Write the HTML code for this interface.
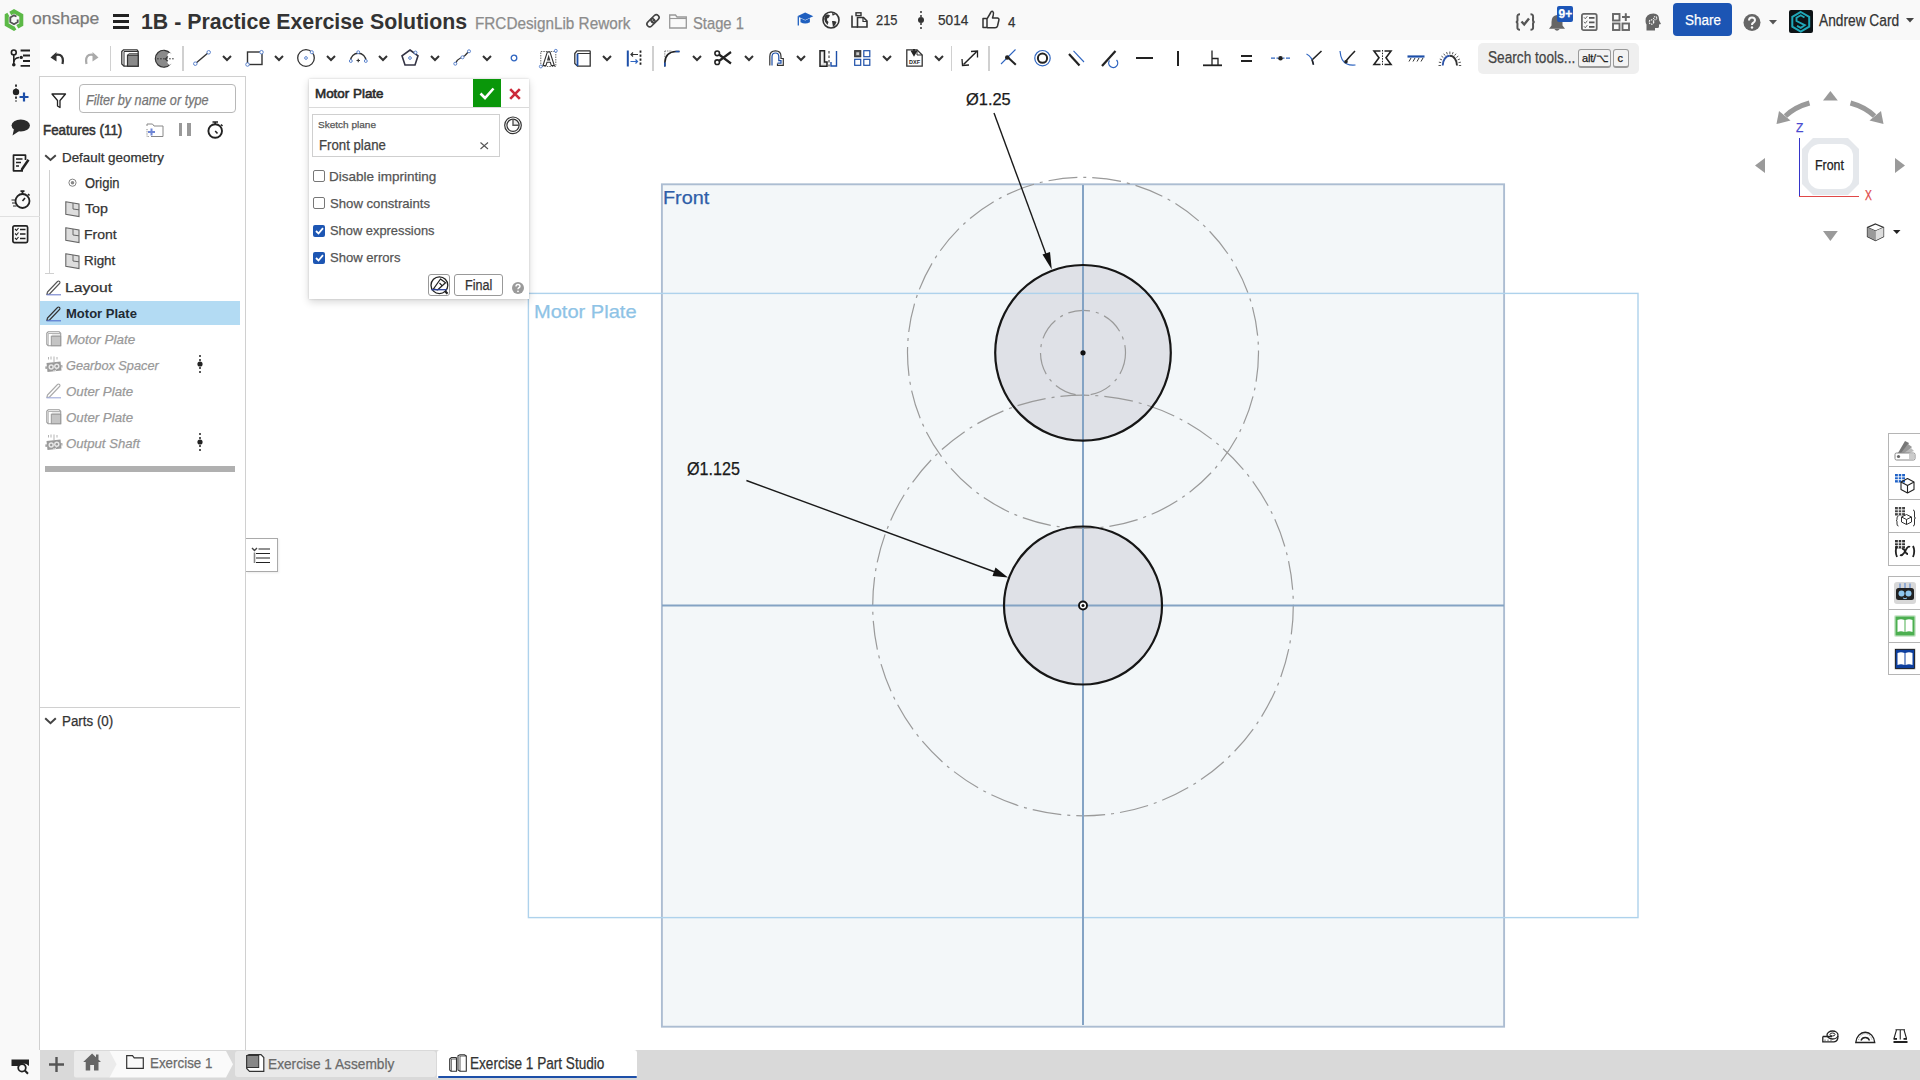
<!DOCTYPE html>
<html><head><meta charset="utf-8">
<style>
*{margin:0;padding:0;box-sizing:border-box}
html,body{width:1920px;height:1080px;overflow:hidden;background:#fff;font-family:"Liberation Sans",sans-serif;color:#333}
.a{position:absolute}
.t{position:absolute;white-space:nowrap;transform-origin:0 0;-webkit-text-stroke:0.25px currentColor}
.b{-webkit-text-stroke:0 !important}
svg{position:absolute;overflow:visible}
</style></head><body>

<div class="a" style="left:0px;top:0px;width:1920px;height:40px;background:#f9f9f9"></div>
<div class="a" style="left:0px;top:40px;width:40px;height:1040px;background:#f9f9f9"></div>
<div class="a" style="left:40px;top:40px;width:1880px;height:1010px;background:#fff"></div>
<svg style="left:0;top:0" width="1920" height="1080" viewBox="0 0 1920 1080"><rect x="661.9" y="184.3" width="842.2" height="842.4" fill="#f3f7f9" stroke="#acbdd2" stroke-width="1.9"/><circle cx="1083" cy="352.8" r="87.8" fill="#dfe1e7"/><circle cx="1083" cy="605.5" r="79" fill="#dfe1e7"/><circle cx="1083" cy="352.8" r="175.5" fill="none" stroke="#9a9a9a" stroke-width="1.2" stroke-dasharray="29 6 3 6"/><circle cx="1083" cy="352.8" r="42.5" fill="none" stroke="#9a9a9a" stroke-width="1.2" stroke-dasharray="22 6 3 6"/><circle cx="1083" cy="605.5" r="210.3" fill="none" stroke="#9a9a9a" stroke-width="1.2" stroke-dasharray="29 6 3 6"/><rect x="528.4" y="293.4" width="1109.6" height="624.2" fill="none" stroke="#aed2ec" stroke-width="1.4"/><line x1="1083" y1="185" x2="1083" y2="1025" stroke="#84a3c4" stroke-width="2"/><line x1="662" y1="605.5" x2="1504" y2="605.5" stroke="#84a3c4" stroke-width="2"/><circle cx="1083" cy="352.8" r="87.8" fill="none" stroke="#161616" stroke-width="2.2"/><circle cx="1083" cy="605.5" r="79" fill="none" stroke="#161616" stroke-width="2.2"/><circle cx="1083" cy="352.8" r="2.6" fill="#111"/><circle cx="1083" cy="605.5" r="4" fill="#fff" stroke="#111" stroke-width="1.9"/><circle cx="1083" cy="605.5" r="1.5" fill="#111"/><line x1="994" y1="113" x2="1047" y2="257" stroke="#1a1a1a" stroke-width="1.4"/><path d="M1051.8 269.4 L1042.5 254.5 L1050 252 Z" fill="#111"/><line x1="746.4" y1="480.5" x2="995" y2="572" stroke="#1a1a1a" stroke-width="1.4"/><path d="M1008 577.4 L992.5 576 L995.5 567.5 Z" fill="#111"/></svg>
<svg style="left:4px;top:9px" width="20" height="22" viewBox="0 0 20 22" ><path d="M10 2.3 L17.3 6.5 L17.3 15.5 L10 19.7 L2.7 15.5 L2.7 6.5 Z" fill="none" stroke="#5cb947" stroke-width="4" stroke-linejoin="miter" stroke-dasharray="22 2.2 21 2.2"/><path d="M12.5 7.5 L10 6.3 L6.3 8.5 L6.3 13 L10 15.2 L13.7 13 L13.7 10.5" fill="none" stroke="#555" stroke-width="1.9"/></svg>
<div class="a" style="left:113px;top:14.2px;width:16px;height:2.6px;background:#222"></div>
<div class="a" style="left:113px;top:20.4px;width:16px;height:2.6px;background:#222"></div>
<div class="a" style="left:113px;top:26.3px;width:16px;height:2.6px;background:#222"></div>
<svg style="left:645px;top:13px" width="16" height="16" viewBox="0 0 16 16" ><path d="M6.5 9.5 L9.5 6.5" stroke="#444" stroke-width="1.6"/><rect x="7.3" y="1.2" width="5.5" height="9" rx="2.7" transform="rotate(45 10 5.7)" fill="none" stroke="#444" stroke-width="1.6"/><rect x="3.2" y="5.3" width="5.5" height="9" rx="2.7" transform="rotate(45 6 9.8)" fill="none" stroke="#444" stroke-width="1.6"/></svg>
<svg style="left:669px;top:14px" width="18" height="15" viewBox="0 0 18 15" ><path d="M0.7 1 L6.5 1 L8 3 L17.3 3 L17.3 14 L0.7 14 Z" fill="none" stroke="#999" stroke-width="1.3"/><path d="M0.7 4.5 L17.3 4.5" stroke="#999" stroke-width="1.1"/></svg>
<svg style="left:797px;top:12.4px" width="16.5" height="14.6" viewBox="0 0 16.5 14.6" ><path d="M8.2 0.5 L16.3 4.3 L8.2 8 L0.2 4.3 Z" fill="#1f5fbf"/><path d="M3.5 6.3 L3.5 10.2 Q8.2 12.8 12.9 10.2 L12.9 6.3 L8.2 8.6 Z" fill="#1f5fbf"/><path d="M1.3 5 L1.3 13.5" stroke="#1f5fbf" stroke-width="1.3"/></svg>
<svg style="left:822px;top:11px" width="18" height="18" viewBox="0 0 18 18" ><circle cx="9" cy="9" r="8" fill="none" stroke="#333" stroke-width="1.6"/><path d="M3.5 4 Q6 3 8 4.5 Q7 7 5 7.5 Q4.5 9.5 6.5 11 L5.5 14 Q2.5 11 2.2 8 Z" fill="#333"/><path d="M10 10 Q13 9.5 14.5 11 Q13.5 14.5 11 16 Q10.5 13 10 10 Z" fill="#333"/><path d="M10 2 Q12 3 13.5 2.8 Q12 5 10.5 4.5 Z" fill="#333"/></svg>
<svg style="left:851px;top:12.4px" width="17" height="15.6" viewBox="0 0 17 15.6" ><path d="M1 3.5 L1 15 L7 15" fill="none" stroke="#333" stroke-width="1.6"/><rect x="5" y="0.8" width="5" height="2.8" fill="none" stroke="#333" stroke-width="1.4"/><path d="M6.5 5.5 L12.5 5.5 L16 9 L16 15 L6.5 15 Z" fill="none" stroke="#333" stroke-width="1.6"/><path d="M12 5.5 L12 9.5 L16 9.5" fill="none" stroke="#333" stroke-width="1.2"/></svg>
<svg style="left:917px;top:11px" width="8" height="18" viewBox="0 0 8 18" ><path d="M4 0 L4 18" stroke="#333" stroke-width="1.5" stroke-dasharray="2 2"/><circle cx="4" cy="9" r="3" fill="#333"/></svg>
<svg style="left:982px;top:10.4px" width="18" height="18.6" viewBox="0 0 18 18.6" ><path d="M1 8.5 L5 8.5 L5 17.5 L1 17.5 Z M5 9 L8.5 3 Q9 0.8 10.8 1.5 Q12 2.5 11.2 5.5 L10.5 8 L15.5 8 Q17.5 8.5 16.8 10.5 L15.5 16 Q15 17.8 13 17.8 L5 17.8" fill="none" stroke="#333" stroke-width="1.5" stroke-linejoin="round"/></svg>
<svg style="left:1515px;top:13px" width="20.5" height="18" viewBox="0 0 20.5 18" ><path d="M5 1.2 Q2.2 1.2 2.4 4 L2.5 7.2 Q2.5 9 0.8 9 Q2.5 9 2.5 10.8 L2.4 14 Q2.2 16.8 5 16.8" fill="none" stroke="#555" stroke-width="2"/><path d="M15.5 1.2 Q18.3 1.2 18.1 4 L18 7.2 Q18 9 19.7 9 Q18 9 18 10.8 L18.1 14 Q18.3 16.8 15.5 16.8" fill="none" stroke="#555" stroke-width="2"/><path d="M6.5 8.5 L9.2 11.5 L14 5.5" fill="none" stroke="#555" stroke-width="2.4"/></svg>
<svg style="left:1548px;top:14px" width="18" height="17" viewBox="0 0 18 17" ><path d="M9 1 Q14.5 1.5 14.5 8 L14.5 11.5 L17 14.8 L1 14.8 L3.5 11.5 L3.5 8 Q3.5 1.5 9 1 Z" fill="#666"/><path d="M6.3 15 Q9 18.5 11.7 15 Z" fill="#666"/></svg>
<div class="a" style="left:1557px;top:6px;width:16px;height:15.5px;background:#1d56b8;border-radius:2px"></div>
<div class="t" style="left:1558.5px;top:5.5px;font-size:12px;line-height:16px;font-weight:700;color:#fff">9+</div>
<svg style="left:1581px;top:13px" width="16.5" height="18" viewBox="0 0 16.5 18" ><rect x="0.9" y="0.9" width="14.8" height="16.3" rx="1.8" fill="none" stroke="#666" stroke-width="1.8"/><path d="M3 4.3 L4.3 5.8 L6.3 3.2 M3 8.8 L4.3 10.3 L6.3 7.7 M3 13.3 L4.3 14.8 L6.3 12.2" fill="none" stroke="#666" stroke-width="1"/><path d="M8 4.8 L13.5 4.8 M8 9.3 L13.5 9.3 M8 13.8 L13.5 13.8" stroke="#555" stroke-width="1.8"/></svg>
<svg style="left:1612px;top:12.5px" width="18.5" height="18.0" viewBox="0 0 18.5 18.0" ><rect x="1" y="1" width="6.5" height="6.5" fill="none" stroke="#666" stroke-width="1.9"/><rect x="1" y="10.5" width="6.5" height="6.5" fill="none" stroke="#666" stroke-width="1.9"/><rect x="10.5" y="10.5" width="6.5" height="6.5" fill="none" stroke="#666" stroke-width="1.9"/><path d="M13.8 0.3 L13.8 8 M10 4.1 L17.8 4.1" stroke="#666" stroke-width="2"/></svg>
<svg style="left:1645px;top:13px" width="17" height="18" viewBox="0 0 17 18" ><g transform="translate(17 0) scale(-1 1)"><path d="M8.5 0.5 Q16.5 0.5 16.5 8 Q16.5 10 15.5 11.5 L15.5 17.5 L7 17.5 L7 15 L4.5 15 Q3 15 3 13.5 L3 11.5 L1 11 L2.8 7.5 Q2.5 0.5 8.5 0.5 Z" fill="#666"/></g><circle cx="6.5" cy="9" r="2.2" fill="none" stroke="#f9f9f9" stroke-width="1.3" stroke-dasharray="1.3 0.9"/><circle cx="10.2" cy="5.2" r="1.6" fill="none" stroke="#f9f9f9" stroke-width="1.1" stroke-dasharray="1.1 0.8"/></svg>
<div class="a" style="left:1673px;top:3.3px;width:58.7px;height:32.5px;background:#1c55b4;border-radius:4px"></div>
<svg style="left:1743px;top:14px" width="18" height="17" viewBox="0 0 18 17" ><circle cx="9" cy="8.5" r="8.5" fill="#666"/><path d="M6 6.5 Q6 3.5 9 3.5 Q12 3.5 12 6.3 Q12 8 10 9 Q9 9.5 9 11" fill="none" stroke="#f9f9f9" stroke-width="2"/><circle cx="9" cy="13.5" r="1.2" fill="#f9f9f9"/></svg>
<svg style="left:1769px;top:19.5px" width="8" height="4.5" viewBox="0 0 8 4.5" ><path d="M0 0 L8 0 L4 4.5 Z" fill="#555"/></svg>
<div class="a" style="left:1789px;top:10px;width:23.5px;height:23px;background:#0d1316;border-radius:2px"></div>
<svg style="left:1789px;top:10px" width="23.5" height="23.5" viewBox="0 0 23.5 23.5" ><path d="M11.75 2 L20.2 6.9 L20.2 16.6 L11.75 21.5 L3.3 16.6 L3.3 6.9 Z" fill="none" stroke="#20a9ba" stroke-width="2"/><path d="M15.5 7.5 L11.75 5.3 L7.5 7.8 L7.5 11 L15.8 15.2 L11.75 17.8 L8 15.8" fill="none" stroke="#20a9ba" stroke-width="1.9"/></svg>
<svg style="left:1906px;top:17.5px" width="8" height="5.0" viewBox="0 0 8 5.0" ><path d="M0 0 L8 0 L4 4.5 Z" fill="#444"/></svg>
<svg style="left:10px;top:49px" width="20" height="18.5" viewBox="0 0 20 18.5" ><circle cx="3.8" cy="3.4" r="2.4" fill="none" stroke="#222" stroke-width="1.6"/><path d="M3.8 5.8 L3.8 16" stroke="#222" stroke-width="1.6"/><circle cx="3.8" cy="15.8" r="1.8" fill="#222"/><path d="M3.8 13 Q4 9 9 8.4" fill="none" stroke="#222" stroke-width="1.5"/><circle cx="11.2" cy="8.4" r="1.7" fill="#222"/><path d="M10.6 1.5 L20 1.5 M13 6.5 L20 6.5 M13 12 L20 12 M10.6 16.8 L20 16.8" stroke="#222" stroke-width="1.8"/></svg>
<svg style="left:50px;top:50px" width="14" height="15" viewBox="0 0 14 15" ><path d="M3 7 Q6 3.5 10 5 Q14 7 12.5 14" fill="none" stroke="#333" stroke-width="2.2"/><path d="M0.5 7.5 L6.5 2 L6.5 11.5 Z" fill="#333"/></svg>
<svg style="left:85px;top:50px" width="14" height="15" viewBox="0 0 14 15" ><path d="M11 7 Q8 3.5 4 5 Q0 7 1.5 14" fill="none" stroke="#aaa" stroke-width="2.2"/><path d="M13.5 7.5 L7.5 2 L7.5 11.5 Z" fill="#aaa"/></svg>
<div class="a" style="left:109.85px;top:45.5px;width:1.5px;height:25px;background:#d0d0d0"></div>
<svg style="left:121px;top:49px" width="18" height="18" viewBox="0 0 18 18" ><path d="M0.8 2.5 L2.5 0.8 L16 0.8 L17.2 2.5 L17.2 17.2 L3 17.2 L0.8 15 Z" fill="#fff" stroke="#333" stroke-width="1.3"/><path d="M3 17.2 L3 2.5 L17.2 2.5" fill="none" stroke="#333" stroke-width="1"/><rect x="6.5" y="6.2" width="10.7" height="11" fill="#8a8a8a" stroke="#333" stroke-width="1.2"/><path d="M6.5 6.2 L8 4.8 L17.2 4.8" fill="none" stroke="#333" stroke-width="1"/></svg>
<svg style="left:155.5px;top:50px" width="18.0" height="17.5" viewBox="0 0 18.0 17.5" ><path d="M14.5 3.5 A8.5 8.5 0 1 0 14.5 14 L9.5 9 Z" fill="#8a8a8a" stroke="#333" stroke-width="1.2"/><ellipse cx="13.2" cy="4.8" rx="1.5" ry="2.3" transform="rotate(40 13.2 4.8)" fill="#fff"/><ellipse cx="13.2" cy="12.8" rx="1.5" ry="2.3" transform="rotate(-40 13.2 12.8)" fill="#fff"/><path d="M1 8.8 L18 8.8" stroke="#333" stroke-width="0.9" stroke-dasharray="1.8 1.2"/></svg>
<div class="a" style="left:182.25px;top:45.5px;width:1.5px;height:25px;background:#d0d0d0"></div>
<svg style="left:193px;top:50px" width="18.5" height="16" viewBox="0 0 18.5 16" ><path d="M2.5 13.5 L15.5 2.5" stroke="#333" stroke-width="1.4"/><circle cx="2.3" cy="13.7" r="1.7600000000000002" fill="#fff" stroke="#4d78c8" stroke-width="0.9"/><circle cx="15.7" cy="2.3" r="1.7600000000000002" fill="#fff" stroke="#4d78c8" stroke-width="0.9"/></svg>
<svg style="left:222px;top:54.8px" width="10" height="6.0" viewBox="0 0 10 6.0" ><path d="M1 1 L5 5 L9 1" fill="none" stroke="#333" stroke-width="2"/></svg>
<svg style="left:245.5px;top:50px" width="17.5" height="16.5" viewBox="0 0 17.5 16.5" ><rect x="1.5" y="2" width="14.5" height="12.5" fill="none" stroke="#333" stroke-width="1.4"/><circle cx="15.5" cy="2.2" r="1.7600000000000002" fill="#fff" stroke="#4d78c8" stroke-width="0.9"/><circle cx="1.5" cy="14.5" r="1.7600000000000002" fill="#fff" stroke="#4d78c8" stroke-width="0.9"/></svg>
<svg style="left:273.75px;top:54.8px" width="10.0" height="6.0" viewBox="0 0 10.0 6.0" ><path d="M1 1 L5 5 L9 1" fill="none" stroke="#333" stroke-width="2"/></svg>
<svg style="left:296.5px;top:49px" width="19.0" height="18" viewBox="0 0 19.0 18" ><circle cx="9" cy="9" r="8.3" fill="none" stroke="#333" stroke-width="1.3"/><circle cx="9" cy="9" r="1.36" fill="#fff" stroke="#4d78c8" stroke-width="0.9"/><circle cx="14.8" cy="3.2" r="1.52" fill="#fff" stroke="#4d78c8" stroke-width="0.9"/></svg>
<svg style="left:325.9px;top:54.8px" width="10.0" height="6.0" viewBox="0 0 10.0 6.0" ><path d="M1 1 L5 5 L9 1" fill="none" stroke="#333" stroke-width="2"/></svg>
<svg style="left:348.5px;top:50px" width="18.5" height="13.5" viewBox="0 0 18.5 13.5" ><path d="M1.5 11 A7.75 7.75 0 0 1 17 11" fill="none" stroke="#333" stroke-width="1.3"/><path d="M7.5 10.5 L11 10.5 M9.25 8.8 L9.25 12.2" stroke="#333" stroke-width="1.1"/><circle cx="9.25" cy="2.2" r="1.4400000000000002" fill="#fff" stroke="#4d78c8" stroke-width="0.9"/><circle cx="1.8" cy="11" r="1.4400000000000002" fill="#fff" stroke="#4d78c8" stroke-width="0.9"/><circle cx="16.8" cy="11" r="1.4400000000000002" fill="#fff" stroke="#4d78c8" stroke-width="0.9"/></svg>
<svg style="left:377.9px;top:54.8px" width="10.0" height="6.0" viewBox="0 0 10.0 6.0" ><path d="M1 1 L5 5 L9 1" fill="none" stroke="#333" stroke-width="2"/></svg>
<svg style="left:400.5px;top:49px" width="18.0" height="17" viewBox="0 0 18.0 17" ><path d="M9 1 L17 6.8 L14 16 L4 16 L1 6.8 Z" fill="none" stroke="#334" stroke-width="1.6"/><circle cx="9" cy="9" r="1.36" fill="#fff" stroke="#4d78c8" stroke-width="0.9"/><circle cx="14.5" cy="3.5" r="1.4400000000000002" fill="#fff" stroke="#4d78c8" stroke-width="0.9"/></svg>
<svg style="left:430px;top:54.8px" width="10" height="6.0" viewBox="0 0 10 6.0" ><path d="M1 1 L5 5 L9 1" fill="none" stroke="#333" stroke-width="2"/></svg>
<svg style="left:452.5px;top:49px" width="18.5" height="17.5" viewBox="0 0 18.5 17.5" ><path d="M2.5 14.5 Q4 10.5 7.5 9 Q10 8 12 6.5 Q13.5 5 15.5 2.5" fill="none" stroke="#333" stroke-width="1.3"/><circle cx="2.3" cy="14.7" r="1.52" fill="#fff" stroke="#4d78c8" stroke-width="0.9"/><circle cx="9.5" cy="8.3" r="1.52" fill="#fff" stroke="#4d78c8" stroke-width="0.9"/><circle cx="16" cy="2.3" r="1.52" fill="#fff" stroke="#4d78c8" stroke-width="0.9"/></svg>
<svg style="left:481.9px;top:54.8px" width="10.0" height="6.0" viewBox="0 0 10.0 6.0" ><path d="M1 1 L5 5 L9 1" fill="none" stroke="#333" stroke-width="2"/></svg>
<svg style="left:510px;top:53.5px" width="8" height="8.0" viewBox="0 0 8 8.0" ><circle cx="4" cy="4" r="2.8" fill="none" stroke="#2f65c0" stroke-width="1.3"/></svg>
<svg style="left:538.5px;top:48.5px" width="19.5" height="19.0" viewBox="0 0 19.5 19.0" ><rect x="1.8" y="2.5" width="15" height="15" fill="none" stroke="#444" stroke-width="0.8" stroke-dasharray="1.5 1"/><path d="M4 16.5 L8.3 3 L11 3 L15.3 16.5 L12.3 16.5 L11.3 13.3 L8 13.3 L7 16.5 Z M8.7 11 L10.6 11 L9.65 7.6 Z" fill="#fff" stroke="#333" stroke-width="1.1"/><circle cx="16.8" cy="1.8" r="1.4400000000000002" fill="#fff" stroke="#4d78c8" stroke-width="0.9"/><circle cx="1.8" cy="17.5" r="1.4400000000000002" fill="#fff" stroke="#4d78c8" stroke-width="0.9"/></svg>
<svg style="left:573.5px;top:49.5px" width="17.0" height="17.0" viewBox="0 0 17.0 17.0" ><path d="M0.8 3.5 L3 0.8 L15.8 0.8 L16.2 1.5 L16.2 16.2 L3.5 16.2 L0.8 13.5 Z" fill="#fff" stroke="#333" stroke-width="1.3"/><path d="M3.5 16.2 L3.5 3.5 L16.2 3.5" fill="none" stroke="#333" stroke-width="1"/><path d="M3.5 3.8 L3.5 16" stroke="#1d4fa8" stroke-width="1.8"/></svg>
<svg style="left:601.9px;top:54.8px" width="10.0" height="6.0" viewBox="0 0 10.0 6.0" ><path d="M1 1 L5 5 L9 1" fill="none" stroke="#333" stroke-width="2"/></svg>
<svg style="left:625.5px;top:49.5px" width="17.5" height="17.0" viewBox="0 0 17.5 17.0" ><path d="M1.8 0.5 L1.8 16.5" stroke="#1d4fa8" stroke-width="2"/><path d="M14.5 0.5 L14.5 16.5" stroke="#222" stroke-width="1.8" stroke-dasharray="2.2 1.8"/><path d="M12 4.5 L5 4.5 M7 2.5 L5 4.5 L7 6.5" fill="none" stroke="#333" stroke-width="1.2"/><path d="M4.5 11.5 L11.5 11.5 M9.5 9.5 L11.5 11.5 L9.5 13.5" fill="none" stroke="#2f65c0" stroke-width="1.2"/></svg>
<div class="a" style="left:652.25px;top:45.5px;width:1.5px;height:25px;background:#d0d0d0"></div>
<svg style="left:663px;top:50px" width="17.5" height="17" viewBox="0 0 17.5 17" ><path d="M1.8 1 L9 1" stroke="#555" stroke-width="0.8" stroke-dasharray="1.3 1"/><path d="M1.8 1 L1.8 8" stroke="#555" stroke-width="0.8" stroke-dasharray="1.3 1"/><path d="M1.8 16.5 L1.8 13 Q2 2 13 1.5 L16.5 1.5" fill="none" stroke="#222" stroke-width="1.6"/><path d="M1.8 12.5 L1.8 16.5 M12.5 1.5 L16.5 1.5" stroke="#1d4fa8" stroke-width="1.6"/></svg>
<svg style="left:692px;top:54.8px" width="10" height="6.0" viewBox="0 0 10 6.0" ><path d="M1 1 L5 5 L9 1" fill="none" stroke="#333" stroke-width="2"/></svg>
<svg style="left:713.5px;top:50px" width="18.5" height="15.5" viewBox="0 0 18.5 15.5" ><circle cx="3.2" cy="3.3" r="2.3" fill="none" stroke="#222" stroke-width="1.6"/><circle cx="3.2" cy="12.2" r="2.3" fill="none" stroke="#222" stroke-width="1.6"/><path d="M5 4.5 L17 13.5 M5 11 L17 2" stroke="#222" stroke-width="2.2"/></svg>
<svg style="left:743.75px;top:54.8px" width="10.0" height="6.0" viewBox="0 0 10.0 6.0" ><path d="M1 1 L5 5 L9 1" fill="none" stroke="#333" stroke-width="2"/></svg>
<svg style="left:768.5px;top:49.5px" width="15.0" height="16.0" viewBox="0 0 15.0 16.0" ><path d="M0.8 15.5 L0.8 6.5 Q0.8 0.8 6.5 0.8 Q12 0.8 12 6.5 L12 8.5 L14.3 8.5 L14.3 15.3 L8.5 15.3 L8.5 13.5" fill="none" stroke="#333" stroke-width="1.2"/><path d="M3 15.5 L3 6.8 Q3 3 6.5 3 Q9.8 3 9.8 6.8 L9.8 10.7 L12 10.7 L12 13.2 L8.5 13.2" fill="none" stroke="#1d4fa8" stroke-width="1.2"/></svg>
<svg style="left:795.9px;top:54.8px" width="10.0" height="6.0" viewBox="0 0 10.0 6.0" ><path d="M1 1 L5 5 L9 1" fill="none" stroke="#333" stroke-width="2"/></svg>
<svg style="left:818.5px;top:49.5px" width="19.0" height="17.0" viewBox="0 0 19.0 17.0" ><path d="M1 0.8 L5.5 0.8 L5.5 12 L8 12 L8 16.2 L1 16.2 Z" fill="#ddd" stroke="#222" stroke-width="1.5"/><path d="M3 2.5 L3 14" stroke="#fff" stroke-width="1.2"/><path d="M10 1 L10 3.5 M10 5.5 L10 8 M10 10 L10 12.5 M10 14.5 L10 16.5" stroke="#222" stroke-width="1"/><path d="M17.5 1 L17.5 16 L12 16 L12 12" fill="none" stroke="#1d4fa8" stroke-width="1.4"/></svg>
<svg style="left:854px;top:50px" width="16.5" height="16" viewBox="0 0 16.5 16" ><rect x="0.7" y="0.7" width="6" height="6" fill="#555" stroke="#333" stroke-width="1.2"/><rect x="2.3" y="2.3" width="2.8" height="2.8" fill="#ccc"/><rect x="9.8" y="0.7" width="6" height="6" fill="none" stroke="#1d4fa8" stroke-width="1.2"/><rect x="0.7" y="9.3" width="6" height="6" fill="none" stroke="#1d4fa8" stroke-width="1.2"/><rect x="9.8" y="9.3" width="6" height="6" fill="none" stroke="#1d4fa8" stroke-width="1.2"/></svg>
<svg style="left:882px;top:54.8px" width="10" height="6.0" viewBox="0 0 10 6.0" ><path d="M1 1 L5 5 L9 1" fill="none" stroke="#333" stroke-width="2"/></svg>
<svg style="left:905.5px;top:49px" width="17.0" height="18" viewBox="0 0 17.0 18" ><path d="M0.8 0.8 L11 0.8 L16.2 6 L16.2 17.2 L0.8 17.2 Z" fill="#fff" stroke="#333" stroke-width="1.3"/><path d="M11 0.8 L11 6 L16.2 6" fill="none" stroke="#333" stroke-width="1"/><path d="M5.5 1.5 L8 6 L10.5 1.5 M8 0 L8 6" fill="none" stroke="#222" stroke-width="1.8"/><text x="8.5" y="15" font-family="Liberation Sans" font-weight="700" font-size="5.5" text-anchor="middle" fill="#222">DXF</text></svg>
<svg style="left:934px;top:54.8px" width="10" height="6.0" viewBox="0 0 10 6.0" ><path d="M1 1 L5 5 L9 1" fill="none" stroke="#333" stroke-width="2"/></svg>
<div class="a" style="left:950.75px;top:45.5px;width:1.5px;height:25px;background:#d0d0d0"></div>
<svg style="left:961px;top:49.5px" width="18" height="16.5" viewBox="0 0 18 16.5" ><path d="M2.5 14.5 L15.5 1.8" stroke="#222" stroke-width="1.5"/><path d="M1 9 L1.5 15.5 L8 15" fill="none" stroke="#222" stroke-width="1.3"/><path d="M10 1.5 L16.5 1 L16.5 7.5" fill="none" stroke="#222" stroke-width="1.3"/></svg>
<div class="a" style="left:988.25px;top:45.5px;width:1.5px;height:25px;background:#d0d0d0"></div>
<svg style="left:999px;top:48px" width="18.5" height="18.5" viewBox="0 0 18.5 18.5" ><path d="M2 16 L16.5 1.5" stroke="#2f65c0" stroke-width="1.1"/><path d="M8 8.5 L16.8 16.8" stroke="#222" stroke-width="2"/><circle cx="8.2" cy="9.5" r="2.2" fill="#222"/></svg>
<svg style="left:1033.5px;top:49.5px" width="17.0" height="16.5" viewBox="0 0 17.0 16.5" ><circle cx="8.5" cy="8.2" r="7.7" fill="none" stroke="#2f65c0" stroke-width="1.2"/><circle cx="8.5" cy="8.2" r="4.6" fill="none" stroke="#222" stroke-width="2"/></svg>
<svg style="left:1067.5px;top:49.5px" width="16.5" height="16.5" viewBox="0 0 16.5 16.5" ><path d="M1 4 L11.5 15.5" stroke="#222" stroke-width="2.2"/><path d="M5.5 0.8 L16 12" stroke="#2f65c0" stroke-width="1.1"/></svg>
<svg style="left:1101px;top:49.5px" width="17.5" height="16.5" viewBox="0 0 17.5 16.5" ><path d="M1 16 L14.5 1" stroke="#222" stroke-width="2.2"/><path d="M8.5 10.5 A4.5 4.5 0 1 0 15.5 10" fill="none" stroke="#2f65c0" stroke-width="1.3"/></svg>
<div class="a" style="left:1135.5px;top:56.8px;width:17px;height:2.2px;background:#222"></div>
<div class="a" style="left:1177px;top:51px;width:2.2px;height:15px;background:#222"></div>
<svg style="left:1202.5px;top:49.5px" width="19.0" height="16.5" viewBox="0 0 19.0 16.5" ><path d="M0 15.3 L19 15.3" stroke="#222" stroke-width="1.8"/><path d="M9 0.5 L9 15 M9 8.5 L15 8.5 L15 15" fill="none" stroke="#222" stroke-width="1.3"/></svg>
<div class="a" style="left:1240.5px;top:55px;width:11px;height:2px;background:#222"></div>
<div class="a" style="left:1240.5px;top:59.5px;width:11px;height:2px;background:#222"></div>
<svg style="left:1271px;top:54px" width="19" height="8.5" viewBox="0 0 19 8.5" ><path d="M0 4.2 L4 4.2 M15 4.2 L19 4.2" stroke="#2f65c0" stroke-width="1.2"/><path d="M6 4.2 L13 4.2" stroke="#2f65c0" stroke-width="0"/><circle cx="9.5" cy="4.2" r="2.3" fill="#222"/><path d="M5.5 4.2 L7 4.2 M12 4.2 L13.5 4.2" stroke="#2f65c0" stroke-width="1.2"/></svg>
<svg style="left:1306px;top:49.5px" width="16" height="15.5" viewBox="0 0 16 15.5" ><path d="M0.5 4 Q6 6.5 7.5 14.5" fill="none" stroke="#2f65c0" stroke-width="1.2"/><path d="M6.5 9.5 L15.5 1" stroke="#222" stroke-width="1.6"/><path d="M6 9.5 L7.5 14.8" stroke="#222" stroke-width="1.6"/></svg>
<svg style="left:1339px;top:49.5px" width="18" height="16.5" viewBox="0 0 18 16.5" ><path d="M1 1 Q2 12 8 14 Q11 15.5 16.5 15" fill="none" stroke="#2f65c0" stroke-width="1.2"/><path d="M7 11 Q11 6 16 1" fill="none" stroke="#222" stroke-width="1.6"/><circle cx="7" cy="11.8" r="1.8" fill="#222"/></svg>
<svg style="left:1373px;top:50px" width="19" height="15.5" viewBox="0 0 19 15.5" ><path d="M7.5 1 L1 1 L6 7.8 L1 14.5 L7.5 14.5" fill="none" stroke="#222" stroke-width="1.6"/><path d="M11.5 1 L18 1 L13 7.8 L18 14.5 L11.5 14.5" fill="none" stroke="#222" stroke-width="1.6"/><path d="M9.5 0 L9.5 15.5" stroke="#222" stroke-width="1" stroke-dasharray="1.5 1.2"/></svg>
<svg style="left:1407px;top:55px" width="18" height="7" viewBox="0 0 18 7" ><path d="M0.5 1.5 L17.5 1.5" stroke="#1d4fa8" stroke-width="2.2"/><path d="M2 6.5 L4 3 M6 6.5 L8 3 M10 6.5 L12 3 M14 6.5 L16 3" stroke="#333" stroke-width="1"/></svg>
<svg style="left:1441px;top:47px" width="20" height="20" viewBox="0 0 20 20" ><path d="M-0.10 18.50 L-2.50 18.50 M0.18 15.62 L-2.18 15.16 M1.00 12.90 L-1.21 11.97 M2.34 10.51 L0.40 9.09 M4.16 8.60 L2.67 6.72 M6.38 7.34 L5.55 5.09 M8.85 6.90 L8.85 4.50 M11.32 7.34 L12.15 5.09 M13.54 8.60 L15.03 6.72 M15.36 10.51 L17.30 9.09 M16.70 12.90 L18.91 11.97 M17.52 15.62 L19.88 15.16 M17.80 18.50 L20.20 18.50 " stroke="#555" stroke-width="1"/><path d="M1.7 18.5 A7.15 9.8 0 0 1 8.85 8.7" fill="none" stroke="#2f55a8" stroke-width="1.9"/><path d="M8.85 8.7 A7.15 9.8 0 0 1 16 18.5" fill="none" stroke="#333" stroke-width="1.9"/></svg>
<div class="a" style="left:1478px;top:42.5px;width:160.75px;height:31.25px;background:#efefef;border-radius:5px"></div>
<div class="a" style="left:1578.2px;top:49.1px;width:32.8px;height:19.4px;border:1.3px solid #9a9a9a;border-bottom-width:2px;border-radius:3px;background:#f3f3f3"></div>
<div class="t" style="left:1582px;top:53.3px;font-size:11px;line-height:11px;color:#222;letter-spacing:-0.2px">alt/⌥</div>
<div class="a" style="left:1612.5px;top:49.1px;width:16.1px;height:19.4px;border:1.3px solid #9a9a9a;border-bottom-width:2px;border-radius:3px;background:#f3f3f3"></div>
<div class="t" style="left:1617.6px;top:53.3px;font-size:11px;line-height:11px;color:#222">c</div>
<div class="a" style="left:39px;top:76px;width:207px;height:974px;background:#fff;border-left:1px solid #d0d0d0;border-top:1px solid #d0d0d0;border-right:1px solid #d0d0d0"></div>
<svg style="left:12px;top:84px" width="17.5" height="18.5" viewBox="0 0 17.5 18.5" ><path d="M4 0.5 L4 17.5" stroke="#222" stroke-width="1.8" stroke-dasharray="2.2 1.8"/><circle cx="4" cy="8" r="3.2" fill="#222"/><path d="M7.5 13 L16.5 13 M12 8.5 L12 17.5" stroke="#1d4fa8" stroke-width="2.2"/></svg>
<svg style="left:10.5px;top:119px" width="19.5" height="17" viewBox="0 0 19.5 17" ><ellipse cx="9.75" cy="6.5" rx="9.2" ry="6" fill="#2a2a2a"/><path d="M3 10 L1.5 16.5 L9 11.5 Z" fill="#2a2a2a"/></svg>
<svg style="left:12px;top:154px" width="18" height="18" viewBox="0 0 18 18" ><path d="M11 16.8 L1.5 16.8 L1.5 1.2 L13.5 1.2 L13.5 6" fill="none" stroke="#222" stroke-width="1.7" stroke-linejoin="round"/><path d="M4 5 L10.5 5 M4 8.5 L9 8.5 M4 12 L7 12" stroke="#222" stroke-width="1.5"/><path d="M9 14.5 L15.5 5 L17.5 6.5 L11 16 L8.5 16.8 Z" fill="#222"/></svg>
<svg style="left:10.5px;top:189.5px" width="19.5" height="20.0" viewBox="0 0 19.5 20.0" ><circle cx="11.5" cy="11" r="7" fill="none" stroke="#222" stroke-width="1.8"/><path d="M9.5 1.2 L13.5 1.2 M11.5 1.2 L11.5 4" stroke="#222" stroke-width="1.8"/><path d="M11.5 11 L14 8" stroke="#222" stroke-width="1.6"/><path d="M0.5 10 L4 10 M1 13 L4.3 13 M2 16 L5.5 16" stroke="#222" stroke-width="1.2"/><path d="M17 4 L18.5 5.5" stroke="#222" stroke-width="1.6"/></svg>
<div class="a" style="left:0px;top:216px;width:40px;height:1px;background:#e0e0e0"></div>
<svg style="left:12px;top:224.5px" width="16.5" height="18.5" viewBox="0 0 16.5 18.5" ><rect x="0.9" y="0.9" width="14.7" height="16.7" rx="1.5" fill="none" stroke="#222" stroke-width="1.7"/><path d="M3 4 L4.5 5.5 L6.5 3 M3 8.5 L4.5 10 L6.5 7.5 M3 13 L4.5 14.5 L6.5 12" fill="none" stroke="#222" stroke-width="1.1"/><path d="M8 4.5 L13.5 4.5 M8 9 L13.5 9 M8 13.5 L13.5 13.5" stroke="#222" stroke-width="1.5"/></svg>
<svg style="left:51px;top:92.5px" width="15.5" height="15.5" viewBox="0 0 15.5 15.5" ><path d="M1 1 L14.5 1 L9 7.5 L9 14.5 L6.5 13 L6.5 7.5 Z" fill="none" stroke="#222" stroke-width="1.3" stroke-linejoin="round"/></svg>
<div class="a" style="left:79.3px;top:84.3px;width:157.2px;height:29px;border:1px solid #b8b8b8;border-radius:4px;background:#fff"></div>
<svg style="left:146px;top:122.5px" width="18" height="14.5" viewBox="0 0 18 14.5" ><path d="M1 3 L1 1 L6.5 1 L8 3 L17 3 L17 13.5 L5 13.5" fill="none" stroke="#888" stroke-width="1"/><path d="M1 6 L1 13.5 L3 13.5" fill="none" stroke="#888" stroke-width="1" stroke-dasharray="1.2 1"/><path d="M2 9 L9 9 M5.5 5.5 L5.5 12.5" stroke="#6f86d6" stroke-width="2"/></svg>
<div class="a" style="left:178.8px;top:123.2px;width:3.6px;height:13.3px;background:#999"></div>
<div class="a" style="left:187.4px;top:123.2px;width:3.6px;height:13.3px;background:#999"></div>
<svg style="left:206.5px;top:121px" width="16.5" height="18" viewBox="0 0 16.5 18" ><circle cx="8.2" cy="10" r="6.8" fill="none" stroke="#222" stroke-width="1.9"/><path d="M5.5 1 L11 1 M8.2 1 L8.2 3.3" stroke="#222" stroke-width="1.7"/><path d="M8.2 10 L10.5 12.5" stroke="#222" stroke-width="1.6"/><path d="M14 3.5 L15.5 5" stroke="#222" stroke-width="1.5"/></svg>
<svg style="left:44px;top:153.5px" width="13" height="7.5" viewBox="0 0 13 7.5" ><path d="M1.2 1.2 L6.5 6 L11.8 1.2" fill="none" stroke="#444" stroke-width="2"/></svg>
<div class="a" style="left:49px;top:170.4px;width:1px;height:102.5px;background:#d0d0d0"></div>
<div class="a" style="left:45px;top:272.8px;width:9px;height:1px;background:#d0d0d0"></div>
<svg style="left:68px;top:178px" width="9" height="9.5" viewBox="0 0 9 9.5" ><circle cx="4.5" cy="4.7" r="3.6" fill="none" stroke="#777" stroke-width="0.9"/><circle cx="4.5" cy="4.7" r="1.8" fill="#888"/></svg>
<svg style="left:65.4px;top:201px" width="15.0" height="16.5" viewBox="0 0 15.0 16.5" ><path d="M0.8 0.8 L14 3 L14 15.5 L0.8 13.3 Z" fill="#ddd" stroke="#666" stroke-width="1.1"/><path d="M8 2 L8 8 L14 8.8" fill="none" stroke="#666" stroke-width="1"/></svg>
<svg style="left:65.4px;top:227px" width="15.0" height="16.5" viewBox="0 0 15.0 16.5" ><path d="M0.8 0.8 L14 3 L14 15.5 L0.8 13.3 Z" fill="#ddd" stroke="#666" stroke-width="1.1"/><path d="M8 2 L8 8 L14 8.8" fill="none" stroke="#666" stroke-width="1"/></svg>
<svg style="left:65.4px;top:252.8px" width="15.0" height="16.5" viewBox="0 0 15.0 16.5" ><path d="M0.8 0.8 L14 3 L14 15.5 L0.8 13.3 Z" fill="#ddd" stroke="#666" stroke-width="1.1"/><path d="M8 2 L8 8 L14 8.8" fill="none" stroke="#666" stroke-width="1"/></svg>
<svg style="left:46px;top:278.5px" width="16" height="16.5" viewBox="0 0 16 16.5" ><path d="M1.5 13 L11.5 2.5 Q12.5 1.5 13.5 2.5 Q14.5 3.5 13.5 4.5 L3.5 15 L0.8 15.5 Z" fill="none" stroke="#555" stroke-width="1.1" stroke-linejoin="round"/><path d="M0.5 15.8 L15 15.8" stroke="#6f7fcc" stroke-width="1.1"/></svg>
<div class="a" style="left:40px;top:301px;width:200px;height:23.7px;background:#b3dbf3"></div>
<svg style="left:45.7px;top:304.5px" width="16.0" height="16.5" viewBox="0 0 16.0 16.5" ><path d="M1.5 13 L11.5 2.5 Q12.5 1.5 13.5 2.5 Q14.5 3.5 13.5 4.5 L3.5 15 L0.8 15.5 Z" fill="none" stroke="#333" stroke-width="1.1" stroke-linejoin="round"/><path d="M0.5 15.8 L15 15.8" stroke="#4f6fcc" stroke-width="1.1"/></svg>
<svg style="left:46px;top:330.5px" width="15.5" height="16.0" viewBox="0 0 15.5 16.0" ><path d="M0.8 2.2 L2.2 0.8 L13.2 0.8 L14.7 2.2 L14.7 14.7 L2.2 14.7 L0.8 13.2 Z" fill="#fff" stroke="#999" stroke-width="1.1"/><path d="M2.2 14.7 L2.2 2.5 L14.7 2.5" fill="none" stroke="#aaa" stroke-width="0.9"/><rect x="5.3" y="5.3" width="9.4" height="9.4" fill="#c4c4c4" stroke="#999" stroke-width="1"/><path d="M5.3 5.3 L6.5 4.2 L14.7 4.2" fill="none" stroke="#aaa" stroke-width="0.8"/></svg>
<svg style="left:45px;top:356px" width="17" height="16" viewBox="0 0 17 16" ><path d="M1.5 7 L15.5 5.5 L16.5 14.5 L2.5 16 Z" fill="#9a9a9a"/><path d="M0.3 10.5 L1.8 10.3 L2 12.8 L0.5 13 Z M16.2 9 L17.3 8.9 L17.5 11.5 L16.4 11.6 Z" fill="#9a9a9a"/><circle cx="6.2" cy="11" r="2.7" fill="#e8e8e8"/><circle cx="11.8" cy="10.3" r="2.7" fill="#e8e8e8"/><circle cx="6.2" cy="11" r="1.2" fill="#999"/><circle cx="11.8" cy="10.3" r="1.2" fill="#999"/><path d="M3.5 1 L3.5 3.5 M6 0.5 L6 3.5 M9 0.5 L9 6 M12 1 L12 3.5" stroke="#aaa" stroke-width="0.9"/><path d="M8 15 Q10 15.5 11.5 13.5" fill="none" stroke="#e8e8e8" stroke-width="1"/></svg>
<svg style="left:197px;top:355px" width="6" height="18" viewBox="0 0 6 18" ><path d="M3 0 L3 18" stroke="#222" stroke-width="1.5" stroke-dasharray="2 2"/><circle cx="3" cy="9" r="2.6" fill="#222"/></svg>
<svg style="left:46px;top:382px" width="16" height="16" viewBox="0 0 16 16" ><path d="M1.5 13 L11.5 2.5 Q12.5 1.5 13.5 2.5 Q14.5 3.5 13.5 4.5 L3.5 15 L0.8 15.5 Z" fill="none" stroke="#aaa" stroke-width="1.1" stroke-linejoin="round"/><path d="M0.5 15.8 L15 15.8" stroke="#9ea9d8" stroke-width="1.1"/></svg>
<svg style="left:46px;top:408.5px" width="15.5" height="16.0" viewBox="0 0 15.5 16.0" ><path d="M0.8 2.2 L2.2 0.8 L13.2 0.8 L14.7 2.2 L14.7 14.7 L2.2 14.7 L0.8 13.2 Z" fill="#fff" stroke="#999" stroke-width="1.1"/><path d="M2.2 14.7 L2.2 2.5 L14.7 2.5" fill="none" stroke="#aaa" stroke-width="0.9"/><rect x="5.3" y="5.3" width="9.4" height="9.4" fill="#c4c4c4" stroke="#999" stroke-width="1"/><path d="M5.3 5.3 L6.5 4.2 L14.7 4.2" fill="none" stroke="#aaa" stroke-width="0.8"/></svg>
<svg style="left:45px;top:434px" width="17" height="16" viewBox="0 0 17 16" ><path d="M1.5 7 L15.5 5.5 L16.5 14.5 L2.5 16 Z" fill="#9a9a9a"/><path d="M0.3 10.5 L1.8 10.3 L2 12.8 L0.5 13 Z M16.2 9 L17.3 8.9 L17.5 11.5 L16.4 11.6 Z" fill="#9a9a9a"/><circle cx="6.2" cy="11" r="2.7" fill="#e8e8e8"/><circle cx="11.8" cy="10.3" r="2.7" fill="#e8e8e8"/><circle cx="6.2" cy="11" r="1.2" fill="#999"/><circle cx="11.8" cy="10.3" r="1.2" fill="#999"/><path d="M3.5 1 L3.5 3.5 M6 0.5 L6 3.5 M9 0.5 L9 6 M12 1 L12 3.5" stroke="#aaa" stroke-width="0.9"/><path d="M8 15 Q10 15.5 11.5 13.5" fill="none" stroke="#e8e8e8" stroke-width="1"/></svg>
<svg style="left:197px;top:433px" width="6" height="18" viewBox="0 0 6 18" ><path d="M3 0 L3 18" stroke="#222" stroke-width="1.5" stroke-dasharray="2 2"/><circle cx="3" cy="9" r="2.6" fill="#222"/></svg>
<div class="a" style="left:44.7px;top:466px;width:190px;height:6.3px;background:#b0b0b0"></div>
<div class="a" style="left:40px;top:707px;width:200px;height:1px;background:#d0d0d0"></div>
<svg style="left:43.5px;top:716.5px" width="13.0" height="8.0" viewBox="0 0 13.0 8.0" ><path d="M1.2 1.2 L6.5 6.2 L11.8 1.2" fill="none" stroke="#444" stroke-width="2"/></svg>
<div class="a" style="left:245.5px;top:538.3px;width:32.5px;height:33.3px;background:#fff;border:1px solid #aaa;border-left:none;box-shadow:1px 1px 2px rgba(0,0,0,0.08)"></div>
<svg style="left:251px;top:546.5px" width="20" height="18.5" viewBox="0 0 20 18.5" ><path d="M1 1 L3.5 3.5 L6 1" fill="none" stroke="#444" stroke-width="1.4"/><path d="M3.5 5.5 L3.5 16" stroke="#888" stroke-width="1.6"/><path d="M7.5 2 L19 2 M5 6.5 L19 6.5 M5 11 L19 11 M5 15.5 L19 15.5" stroke="#222" stroke-width="1.2"/></svg>
<div class="a" style="left:308.75px;top:79px;width:220.5px;height:220px;background:#fff;box-shadow:0 3px 8px rgba(0,0,0,0.16),0 0 2px rgba(0,0,0,0.18)"></div>
<div class="a" style="left:308.75px;top:107px;width:220.5px;height:1px;background:#dadada"></div>
<div class="a" style="left:473.2px;top:79.2px;width:27.6px;height:27.5px;background:#0a970a"></div>
<svg style="left:479px;top:86px" width="16" height="14" viewBox="0 0 16 14" ><path d="M1.5 7.5 L6 12 L14.5 2.5" fill="none" stroke="#fff" stroke-width="2.6"/></svg>
<svg style="left:509px;top:88px" width="12" height="12" viewBox="0 0 12 12" ><path d="M1.2 1.2 L10.8 10.8 M10.8 1.2 L1.2 10.8" stroke="#cc2a3a" stroke-width="2.6"/></svg>
<div class="a" style="left:312.3px;top:113.6px;width:187.3px;height:43px;border:1px solid #cfcfcf;background:#fff"></div>
<svg style="left:480px;top:142px" width="8.5" height="7.5" viewBox="0 0 8.5 7.5" ><path d="M0.5 0.5 L8 7 M8 0.5 L0.5 7" stroke="#555" stroke-width="1.1"/></svg>
<svg style="left:504px;top:116px" width="18" height="18" viewBox="0 0 18 18" ><path d="M9 9.3 L9 3.2 A6.1 6.1 0 0 1 15.1 9.3 Z" fill="#eee"/><circle cx="9" cy="9.3" r="8.3" fill="none" stroke="#333" stroke-width="1.2"/><circle cx="9" cy="9.3" r="6.1" fill="none" stroke="#333" stroke-width="1.2"/><path d="M9 3.2 L9 9.3 L15.1 9.3" fill="none" stroke="#555" stroke-width="1.4"/></svg>
<div class="a" style="left:312.9px;top:170.4px;width:12px;height:11.7px;border:1px solid #777;border-radius:2px;background:#fff"></div>
<div class="a" style="left:312.9px;top:197.3px;width:12px;height:11.7px;border:1px solid #777;border-radius:2px;background:#fff"></div>
<div class="a" style="left:312.9px;top:225px;width:12px;height:11.7px;background:#1d56b3;border-radius:2px"></div>
<svg style="left:314.5px;top:227px" width="9.0" height="8" viewBox="0 0 9.0 8" ><path d="M1 4 L3.5 6.5 L8 1.2" fill="none" stroke="#fff" stroke-width="1.8"/></svg>
<div class="a" style="left:312.9px;top:252px;width:12px;height:11.7px;background:#1d56b3;border-radius:2px"></div>
<svg style="left:314.5px;top:254px" width="9.0" height="8" viewBox="0 0 9.0 8" ><path d="M1 4 L3.5 6.5 L8 1.2" fill="none" stroke="#fff" stroke-width="1.8"/></svg>
<div class="a" style="left:428.2px;top:274px;width:21.4px;height:21.6px;border:1px solid #999;border-radius:3px;background:#fff"></div>
<svg style="left:428.5px;top:274.5px" width="21.0" height="21.0" viewBox="0 0 21.0 21.0" ><circle cx="10.4" cy="10.2" r="8.4" fill="none" stroke="#222" stroke-width="1.3"/><path d="M4.5 13.8 L11.5 4 L16.5 7.8 L8.5 15 Z M10.5 8 L12.8 10.3" fill="none" stroke="#222" stroke-width="1.2" stroke-linejoin="round"/><path d="M2.3 14.7 L17.8 14.7" stroke="#2a3f9a" stroke-width="1.3"/><path d="M16 16 L18.5 18.8" stroke="#222" stroke-width="2.2"/></svg>
<div class="a" style="left:454.4px;top:274px;width:48.3px;height:21.6px;border:1px solid #999;border-radius:3px;background:#fff"></div>
<svg style="left:512px;top:282px" width="12" height="12" viewBox="0 0 12 12" ><circle cx="6" cy="6" r="6" fill="#9a9a9a"/><path d="M4 4.5 Q4 2.5 6 2.5 Q8 2.5 8 4.3 Q8 5.5 6.5 6 Q6 6.3 6 7.3" fill="none" stroke="#fff" stroke-width="1.4"/><circle cx="6" cy="9.3" r="0.9" fill="#fff"/></svg>
<svg style="left:1822.8px;top:91.3px" width="14.8" height="9.5" viewBox="0 0 14.8 9.5" ><path d="M7.4 0 L14.8 9.5 L0 9.5 Z" fill="#9a9a9a"/></svg>
<svg style="left:1822.8px;top:230.8px" width="14.8" height="10.0" viewBox="0 0 14.8 10.0" ><path d="M0 0 L14.8 0 L7.4 10 Z" fill="#9a9a9a"/></svg>
<svg style="left:1755px;top:158.3px" width="10" height="15.0" viewBox="0 0 10 15.0" ><path d="M10 0 L10 15 L0 7.5 Z" fill="#9a9a9a"/></svg>
<svg style="left:1895px;top:158.3px" width="10" height="15.0" viewBox="0 0 10 15.0" ><path d="M0 0 L10 7.5 L0 15 Z" fill="#9a9a9a"/></svg>
<svg style="left:1775px;top:99px" width="37" height="27" viewBox="0 0 37 27" ><path d="M34.5 4 Q20 8 10.5 17" fill="none" stroke="#9a9a9a" stroke-width="5"/><path d="M1.5 25 L4 12 L15.5 21.5 Z" fill="#9a9a9a"/></svg>
<svg style="left:1848px;top:99px" width="37" height="27" viewBox="0 0 37 27" ><path d="M2.5 4 Q17 8 26.5 17" fill="none" stroke="#9a9a9a" stroke-width="5"/><path d="M35.5 25 L33 12 L21.5 21.5 Z" fill="#9a9a9a"/></svg>
<svg style="left:1801.7px;top:137.5px" width="57.0" height="57.0" viewBox="0 0 57.0 57.0" ><path d="M11 0 L46 0 L57 11 L57 46 L46 57 L11 57 L0 46 L0 11 Z" fill="#e5e8ec"/><rect x="6" y="6" width="45" height="45" rx="12" fill="#fff"/></svg>
<div class="a" style="left:1799px;top:137.5px;width:1.3px;height:59px;background:#3535c8"></div>
<div class="a" style="left:1799px;top:195.5px;width:60px;height:1.3px;background:#e04848"></div>
<svg style="left:1865.5px;top:223px" width="19.0" height="18" viewBox="0 0 19.0 18" ><path d="M9.5 1 L17.5 4.5 L17.5 13.5 L9.5 17.5 L1.5 13.5 L1.5 4.5 Z" fill="#fff" stroke="#333" stroke-width="1.3"/><path d="M1.5 4.5 L9.5 8 L17.5 4.5 M9.5 8 L9.5 17.5" fill="none" stroke="#333" stroke-width="1.1"/><path d="M1.5 4.5 L9.5 8 L9.5 17.5 L1.5 13.5 Z" fill="#9a9a9a"/><path d="M9.5 8 L17.5 4.5 L17.5 13.5 L9.5 17.5 Z" fill="#ddd"/></svg>
<svg style="left:1892.5px;top:230px" width="7.5" height="4" viewBox="0 0 7.5 4" ><path d="M0 0 L7.5 0 L3.75 4 Z" fill="#222"/></svg>
<div class="a" style="left:1887.5px;top:433px;width:33px;height:132.5px;border:1px solid #b5b5b5;border-right:none;background:#fff"></div>
<div class="a" style="left:1887.5px;top:466px;width:33px;height:1px;background:#b5b5b5"></div>
<div class="a" style="left:1887.5px;top:499px;width:33px;height:1px;background:#b5b5b5"></div>
<div class="a" style="left:1887.5px;top:532.3px;width:33px;height:1px;background:#b5b5b5"></div>
<div class="a" style="left:1887.5px;top:576.3px;width:33px;height:99px;border:1px solid #b5b5b5;border-right:none;background:#fff"></div>
<div class="a" style="left:1887.5px;top:609.3px;width:33px;height:1px;background:#b5b5b5"></div>
<div class="a" style="left:1887.5px;top:642.2px;width:33px;height:1px;background:#b5b5b5"></div>
<svg style="left:1894px;top:440px" width="22" height="21" viewBox="0 0 22 21" ><path d="M4 13 L11 1 L15 3 L9 13 Z" fill="#777"/><path d="M7 13 L14 4 L18 7 L12 13 Z" fill="#999"/><path d="M10 13 L17 8 L20 11 L15 13 Z" fill="#bbb"/><rect x="1" y="13" width="20" height="7" rx="1.5" fill="#fff" stroke="#888" stroke-width="1"/><rect x="15" y="14" width="5" height="5" fill="#ccc"/><circle cx="4.5" cy="16.5" r="1.6" fill="#666"/></svg>
<svg style="left:1894px;top:473px" width="22" height="21" viewBox="0 0 22 21" ><rect x="1" y="1" width="10" height="8.5" fill="#1f62c8"/><path d="M1 3.83 L11 3.83 M1 6.66 L11 6.66 M4.33 1 L4.33 9.5 M7.66 1 L7.66 9.5" stroke="#fff" stroke-width="0.9"/><path d="M7 9 L13.5 5.5 L20 9 L20 16.5 L13.5 20 L7 16.5 Z M7 9 L13.5 12.5 L20 9 M13.5 12.5 L13.5 20" fill="none" stroke="#222" stroke-width="1.1" stroke-linejoin="round"/></svg>
<svg style="left:1894px;top:506px" width="22" height="21" viewBox="0 0 22 21" ><rect x="1" y="1" width="10" height="8.5" fill="#444"/><path d="M1 3.83 L11 3.83 M1 6.66 L11 6.66 M4.33 1 L4.33 9.5 M7.66 1 L7.66 9.5" stroke="#fff" stroke-width="0.9"/><path d="M7.5 11 L12.5 8.5 L17.5 11 L17.5 16 L12.5 18.5 L7.5 16 Z M7.5 11 L12.5 13.5 L17.5 11 M12.5 13.5 L12.5 18.5" fill="#fff" stroke="#333" stroke-width="1"/><path d="M4.5 10 Q3 10 3 12 L3 13.5 Q3 14.5 2 14.5 Q3 14.5 3 15.5 L3 18 Q3 20 4.5 20 M19 4 Q20.5 4 20.5 6 L20.5 11 Q20.5 12 21.5 12 Q20.5 12 20.5 13 L20.5 18 Q20.5 20 19 20" fill="none" stroke="#333" stroke-width="1"/></svg>
<svg style="left:1894px;top:539px" width="22" height="21" viewBox="0 0 22 21" ><rect x="1" y="1" width="10" height="8.5" fill="#333"/><path d="M1 3.83 L11 3.83 M1 6.66 L11 6.66 M4.33 1 L4.33 9.5 M7.66 1 L7.66 9.5" stroke="#fff" stroke-width="0.9"/><path d="M3 7 Q0.5 12 3 18" fill="none" stroke="#222" stroke-width="1.8"/><path d="M19 7 Q21.5 12 19 18" fill="none" stroke="#222" stroke-width="1.8"/><path d="M6 16 Q8 17 10 14 L13 9 Q14.5 7 16 8" fill="none" stroke="#222" stroke-width="1.8"/><path d="M8 10 Q10 9.5 11 12 Q12 15 14 15" fill="none" stroke="#222" stroke-width="1.8"/></svg>
<svg style="left:1893px;top:581px" width="24" height="24" viewBox="0 0 24 24" ><rect x="1" y="1" width="22" height="22" rx="3" fill="#d8d8d8"/><rect x="3" y="7" width="18" height="12" rx="2.5" fill="#222"/><circle cx="8.5" cy="12.5" r="3" fill="#8ec6ee"/><circle cx="15.5" cy="12.5" r="3" fill="#8ec6ee"/><path d="M7 2.5 L7 7 M12 2 L12 7 M17 2.5 L17 7" stroke="#4a7fd0" stroke-width="1"/><path d="M10 17 Q12 18.5 14 17" fill="none" stroke="#8ec6ee" stroke-width="1"/></svg>
<svg style="left:1893px;top:614px" width="24" height="24" viewBox="0 0 24 24" ><rect x="1" y="1" width="22" height="22" rx="2" fill="#d0e8d0"/><rect x="2.5" y="2.5" width="19" height="19" fill="#4caf50"/><path d="M4.5 6 Q8 4.5 11.5 6 L11.5 18 Q8 16.5 4.5 18 Z M12.5 6 Q16 4.5 19.5 6 L19.5 18 Q16 16.5 12.5 18 Z" fill="#fff"/></svg>
<svg style="left:1893px;top:647px" width="24" height="24" viewBox="0 0 24 24" ><rect x="1" y="1" width="22" height="22" rx="2" fill="#d8d8d8"/><rect x="2.5" y="2.5" width="19" height="19" fill="#0d3f9f" stroke="#111" stroke-width="0.8"/><path d="M4.5 6 Q8 4.5 11.5 6 L11.5 18 Q8 16.5 4.5 18 Z M12.5 6 Q16 4.5 19.5 6 L19.5 18 Q16 16.5 12.5 18 Z" fill="#fff"/></svg>
<svg style="left:1822px;top:1029.5px" width="16.5" height="13.0" viewBox="0 0 16.5 13.0" ><ellipse cx="10.5" cy="5" rx="5.5" ry="4" fill="none" stroke="#222" stroke-width="1.3"/><ellipse cx="10.5" cy="4.5" rx="2.5" ry="1.5" fill="none" stroke="#222" stroke-width="1"/><path d="M0.8 6.5 L10 6.5 M0.8 6.5 L0.8 11.8 L12 11.8 Q16 11.5 16 6" fill="none" stroke="#222" stroke-width="1.3"/><path d="M3 9.5 L3 11 M6 9.5 L6 11 M9 9.5 L9 11" stroke="#444" stroke-width="0.8"/></svg>
<svg style="left:1855px;top:1029.5px" width="20.5" height="13.5" viewBox="0 0 20.5 13.5" ><path d="M0.8 12.5 A9.5 11.5 0 0 1 19.7 12.5 Z" fill="none" stroke="#222" stroke-width="1.4"/><path d="M6 10.5 A4.5 4.5 0 0 1 14.5 10.5" fill="none" stroke="#222" stroke-width="1.4"/><path d="M3.5 10 A7 8.5 0 0 1 17 10" fill="none" stroke="#777" stroke-width="0.8" stroke-dasharray="1 1"/></svg>
<svg style="left:1893px;top:1029px" width="14.5" height="14" viewBox="0 0 14.5 14" ><path d="M2.5 0.8 L12 0.8 M7.25 0.8 L7.25 10.5 M3.5 0.8 L1 9.5 M11 0.8 L13.5 9.5" fill="none" stroke="#222" stroke-width="1.1"/><rect x="0.5" y="9" width="3.5" height="1.8" fill="#222"/><rect x="10.5" y="9" width="3.5" height="1.8" fill="#222"/><rect x="0.5" y="12" width="14" height="2" fill="#222"/></svg>
<div class="a" style="left:40px;top:1049.5px;width:1880px;height:30.5px;background:#d9d9d9"></div>
<div class="a" style="left:0px;top:1049.5px;width:40px;height:30.5px;background:#f9f9f9"></div>
<svg style="left:11px;top:1058.5px" width="18.5" height="15.5" viewBox="0 0 18.5 15.5" ><path d="M0.5 0.5 L18 0.5 L18 7 Q14 3.5 10 5 Q7.5 6 7 7 L0.5 7 Z" fill="#222"/><circle cx="11" cy="8.8" r="3.8" fill="none" stroke="#222" stroke-width="1.8"/><path d="M13.8 11.5 L17 14.8" stroke="#222" stroke-width="2"/></svg>
<svg style="left:49px;top:1057px" width="15" height="15" viewBox="0 0 15 15" ><path d="M7.5 0 L7.5 15 M0 7.5 L15 7.5" stroke="#555" stroke-width="2.4"/></svg>
<svg style="left:73.5px;top:1050.5px" width="164" height="27" viewBox="0 0 164 27"><path d="M2 0 L36 0 L43 13.25 L36 26.5 L2 26.5 Q0 26.5 0 24.5 L0 2 Q0 0 2 0 Z" fill="#ebebeb"/><path d="M35.5 0 L152 0 L159 13.25 L152 26.5 L35.5 26.5 L42.5 13.25 Z" fill="#fafafa"/></svg>
<svg style="left:82.75px;top:1053px" width="18.25" height="18" viewBox="0 0 18.25 18" ><path d="M9.1 0.5 L18 9 L15.5 9 L15.5 17.5 L11 17.5 L11 12 L7.2 12 L7.2 17.5 L2.7 17.5 L2.7 9 L0.2 9 Z" fill="#666"/><rect x="13" y="1.5" width="2.5" height="5" fill="#666"/></svg>
<svg style="left:126px;top:1055px" width="18" height="14" viewBox="0 0 18 14" ><path d="M0.7 0.7 L6.5 0.7 L8.2 2.8 L17.3 2.8 L17.3 13.3 L0.7 13.3 Z" fill="none" stroke="#333" stroke-width="1.2"/></svg>
<div class="a" style="left:235px;top:1050.6px;width:200.6px;height:26.4px;background:#e9e9e9;border-radius:3px"></div>
<svg style="left:246px;top:1054px" width="18.5" height="18" viewBox="0 0 18.5 18" ><path d="M0.7 1.8 L3 0.7 L15 0.7 L17.8 3.5 L17.8 17.3 L3.5 17.3 L0.7 14.5 Z" fill="#fff" stroke="#333" stroke-width="1.2"/><rect x="0.7" y="1.5" width="12" height="12" fill="#888" stroke="#333" stroke-width="1"/></svg>
<div class="a" style="left:436.9px;top:1050px;width:200px;height:27.5px;background:#fff;border-radius:3px 3px 0 0"></div>
<div class="a" style="left:437.5px;top:1075.6px;width:199px;height:2px;background:#1d4fa8;border-radius:1px"></div>
<svg style="left:448.5px;top:1054px" width="18.0" height="18" viewBox="0 0 18.0 18" ><path d="M0.7 5 L2.5 3.5 L7 3.5 L7.5 4 L7.5 17.3 L2 17.3 L0.7 16 Z" fill="#fff" stroke="#333" stroke-width="1.1"/><path d="M2.3 17.3 L2.3 5 L7.5 5" fill="none" stroke="#333" stroke-width="0.8"/><path d="M9 1.8 L11 0.7 L15.5 0.7 L17.3 2 L17.3 17.3 L11 17.3 L9 16 Z" fill="#fff" stroke="#333" stroke-width="1.1"/><path d="M11 17.3 L11 2 L17.3 2" fill="none" stroke="#333" stroke-width="0.8"/></svg>
<div class="t" id="dimA" style="left:966.20px;top:91.22px;font-size:17.39px;line-height:17.39px;color:#1a1a1a;transform:scaleX(0.9450);">Ø1.25</div>
<div class="t" id="dimB" style="left:686.70px;top:460.67px;font-size:17.68px;line-height:17.68px;color:#1a1a1a;transform:scaleX(0.9133);">Ø1.125</div>
<div class="t" id="lblFront" style="left:663.45px;top:189.49px;font-size:18.84px;line-height:18.84px;color:#2f5ea8;transform:scaleX(1.0523);">Front</div>
<div class="t" id="lblMP" style="left:534.43px;top:302.99px;font-size:18.84px;line-height:18.84px;color:#8ec3e6;transform:scaleX(1.0654);">Motor Plate</div>
<div class="t" id="logoTxt" style="left:31.75px;top:10.99px;font-size:16.60px;line-height:16.60px;color:#7a7a7a;transform:scaleX(1.0577);">onshape</div>
<div class="t b" id="title" style="left:140.57px;top:9.54px;font-size:22.90px;line-height:22.90px;color:#333;font-weight:700;transform:scaleX(0.9321);">1B - Practice Exercise Solutions</div>
<div class="t" id="frc" style="left:474.84px;top:16.45px;font-size:15.94px;line-height:15.94px;color:#8c8c8c;transform:scaleX(0.9589);">FRCDesignLib Rework</div>
<div class="t" id="stage" style="left:692.80px;top:16.45px;font-size:15.94px;line-height:15.94px;color:#8c8c8c;transform:scaleX(0.9260);">Stage 1</div>
<div class="t" id="n215" style="left:876.00px;top:11.59px;font-size:15.07px;line-height:15.07px;color:#333;transform:scaleX(0.8564);">215</div>
<div class="t" id="n5014" style="left:937.50px;top:11.59px;font-size:15.07px;line-height:15.07px;color:#333;transform:scaleX(0.9055);">5014</div>
<div class="t" id="n4" style="left:1007.90px;top:13.59px;font-size:15.07px;line-height:15.07px;color:#333;transform:scaleX(0.8875);">4</div>
<div class="t" id="share" style="left:1685.00px;top:12.07px;font-size:15.22px;line-height:15.22px;color:#fff;transform:scaleX(0.8843);">Share</div>
<div class="t" id="user" style="left:1818.75px;top:12.45px;font-size:16.23px;line-height:16.23px;color:#333;transform:scaleX(0.8464);">Andrew Card</div>
<div class="t" id="search" style="left:1488.00px;top:50.45px;font-size:15.94px;line-height:15.94px;color:#444;transform:scaleX(0.8562);">Search tools...</div>
<div class="t" id="filterPh" style="left:86.00px;top:93.05px;font-size:14.06px;line-height:14.06px;color:#767676;font-style:italic;transform:scaleX(0.9028);">Filter by name or type</div>
<div class="t" id="feat" style="left:43.34px;top:124.17px;font-size:13.91px;line-height:13.91px;color:#333;-webkit-text-stroke:0.53px currentColor;transform:scaleX(0.9615);">Features (11)</div>
<div class="t" id="defgeo" style="left:62.22px;top:150.52px;font-size:13.62px;line-height:13.62px;color:#333;transform:scaleX(0.9832);">Default geometry</div>
<div class="t" id="origin" style="left:85.40px;top:177.00px;font-size:13.77px;line-height:13.77px;color:#333;transform:scaleX(0.9400);">Origin</div>
<div class="t" id="top" style="left:85.40px;top:202.27px;font-size:13.33px;line-height:13.33px;color:#333;transform:scaleX(1.0675);">Top</div>
<div class="t" id="front" style="left:84.35px;top:228.47px;font-size:13.33px;line-height:13.33px;color:#333;transform:scaleX(1.0492);">Front</div>
<div class="t" id="right" style="left:84.39px;top:254.47px;font-size:13.33px;line-height:13.33px;color:#333;transform:scaleX(1.0062);">Right</div>
<div class="t" id="layout" style="left:65.39px;top:281.74px;font-size:12.90px;line-height:12.90px;color:#333;transform:scaleX(1.2145);">Layout</div>
<div class="t b" id="mp1" style="left:66.40px;top:306.52px;font-size:13.62px;line-height:13.62px;color:#1f2a33;font-weight:700;transform:scaleX(0.9566);">Motor Plate</div>
<div class="t" id="mp2" style="left:66.40px;top:332.54px;font-size:13.48px;line-height:13.48px;color:#999;font-style:italic;">Motor Plate</div>
<div class="t" id="gbs" style="left:66.40px;top:359.34px;font-size:13.48px;line-height:13.48px;color:#999;font-style:italic;transform:scaleX(0.9453);">Gearbox Spacer</div>
<div class="t" id="op1" style="left:66.40px;top:385.24px;font-size:13.48px;line-height:13.48px;color:#999;font-style:italic;transform:scaleX(0.9847);">Outer Plate</div>
<div class="t" id="op2" style="left:66.40px;top:411.24px;font-size:13.48px;line-height:13.48px;color:#999;font-style:italic;transform:scaleX(0.9847);">Outer Plate</div>
<div class="t" id="os" style="left:66.40px;top:437.44px;font-size:13.48px;line-height:13.48px;color:#999;font-style:italic;transform:scaleX(0.9768);">Output Shaft</div>
<div class="t" id="parts" style="left:62.35px;top:714.25px;font-size:14.06px;line-height:14.06px;color:#333;transform:scaleX(0.9506);">Parts (0)</div>
<div class="t" id="dlgTitle" style="left:314.79px;top:87.42px;font-size:13.33px;line-height:13.33px;color:#2a2a2a;-webkit-text-stroke:0.60px currentColor;transform:scaleX(1.0054);">Motor Plate</div>
<div class="t" id="skpl" style="left:318.20px;top:119.50px;font-size:9.71px;line-height:9.71px;color:#555;transform:scaleX(1.0340);">Sketch plane</div>
<div class="t" id="frpl" style="left:318.64px;top:139.10px;font-size:13.77px;line-height:13.77px;color:#444;transform:scaleX(0.9597);">Front plane</div>
<div class="t" id="cb1" style="left:328.59px;top:169.67px;font-size:13.33px;line-height:13.33px;color:#555;transform:scaleX(1.0132);">Disable imprinting</div>
<div class="t" id="cb2" style="left:329.60px;top:196.57px;font-size:13.33px;line-height:13.33px;color:#555;transform:scaleX(0.9860);">Show constraints</div>
<div class="t" id="cb3" style="left:329.60px;top:224.27px;font-size:13.33px;line-height:13.33px;color:#555;transform:scaleX(0.9659);">Show expressions</div>
<div class="t" id="cb4" style="left:329.60px;top:251.27px;font-size:13.33px;line-height:13.33px;color:#555;transform:scaleX(0.9808);">Show errors</div>
<div class="t" id="final" style="left:464.59px;top:279.17px;font-size:13.91px;line-height:13.91px;color:#333;transform:scaleX(0.9053);">Final</div>
<div class="t" id="cubeFront" style="left:1814.90px;top:159.30px;font-size:13.77px;line-height:13.77px;color:#222;transform:scaleX(0.9008);">Front</div>
<div class="t" id="cubeZ" style="left:1795.80px;top:121.37px;font-size:13.33px;line-height:13.33px;color:#4a4ad0;transform:scaleX(0.9000);">Z</div>
<div class="t" id="cubeX" style="left:1865.00px;top:188.60px;font-size:13.77px;line-height:13.77px;color:#e04848;transform:scaleX(0.7444);">X</div>
<div class="t" id="tab1" style="left:149.69px;top:1056.03px;font-size:14.78px;line-height:14.78px;color:#6a6a6a;transform:scaleX(0.9052);">Exercise 1</div>
<div class="t" id="tab2" style="left:267.60px;top:1055.57px;font-size:15.22px;line-height:15.22px;color:#6a6a6a;transform:scaleX(0.8995);">Exercise 1 Assembly</div>
<div class="t" id="tab3" style="left:469.73px;top:1055.51px;font-size:15.58px;line-height:15.58px;color:#333;transform:scaleX(0.8719);">Exercise 1 Part Studio</div>
</body></html>
